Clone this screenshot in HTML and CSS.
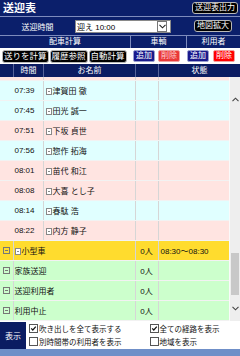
FILE: index.html
```html
<!DOCTYPE html>
<html lang="ja">
<head>
    <meta charset="UTF-8">
    <meta name="viewport" content="width=device-width, initial-scale=1.0">
    <title>送迎表</title>
    <link rel="stylesheet" href="styles.css">
</head>
<body>

    <div class="app">
        <!-- Title bar -->
        <div class="titlebar">
            <h1>送迎表</h1>
            <button class="btn-dark">送迎表出力</button>
        </div>

        <!-- Time selection -->
        <div class="timebar">
            <div class="time-label">送迎時間</div>
            <div class="select">
                <span>迎え 10:00</span>
                <span class="select-arrow">
                    <svg width="7" height="5" viewBox="0 0 7 5"><path d="M0.5 0.8 L3.5 3.8 L6.5 0.8" fill="none" stroke="#222" stroke-width="1.1"/></svg>
                </span>
            </div>
            <button class="btn-dark btn-map">地図拡大</button>
        </div>

        <!-- Section titles -->
        <div class="sections">
            <div class="sec sec-calc">配車計算</div>
            <div class="sec sec-car">車輌</div>
            <div class="sec sec-user">利用者</div>
        </div>

        <!-- Buttons -->
        <div class="toolbar">
            <div class="tool-group tool-calc">
                <button class="btn-dark">送りを計算</button>
                <button class="btn-dark">履歴参照</button>
                <button class="btn-dark">自動計算</button>
            </div>
            <div class="tool-group tool-car">
                <button class="btn-add">追加</button>
                <button class="btn-del">削除</button>
            </div>
            <div class="tool-group tool-user">
                <button class="btn-add">追加</button>
                <button class="btn-del btn-del-hot">削除</button>
            </div>
        </div>

        <!-- Grid header -->
        <div class="grid-head">
            <div class="gh"></div>
            <div class="gh">時間</div>
            <div class="gh">お名前</div>
            <div class="gh"></div>
            <div class="gh">状態</div>
        </div>

        <!-- Grid body -->
        <div class="grid-wrap">
            <div class="grid-body">
                <table class="rows">
                    <colgroup>
                        <col class="c-tree">
                        <col class="c-time">
                        <col class="c-name">
                        <col class="c-count">
                        <col class="c-state">
                    </colgroup>
                    <tbody>
                        <tr class="pink partial"><td></td><td></td><td></td><td></td><td></td></tr>
                        <tr class="cyan"><td></td><td class="time">07:39</td><td class="name"><i class="doc"></i>津賀田 徹</td><td></td><td></td></tr>
                        <tr class="cyan"><td></td><td class="time">07:45</td><td class="name"><i class="doc"></i>田光 誠一</td><td></td><td></td></tr>
                        <tr class="pink"><td></td><td class="time">07:51</td><td class="name"><i class="doc"></i>下坂 貞世</td><td></td><td></td></tr>
                        <tr class="cyan"><td></td><td class="time">07:56</td><td class="name"><i class="doc"></i>惣作 拓海</td><td></td><td></td></tr>
                        <tr class="pink"><td></td><td class="time">08:01</td><td class="name"><i class="doc"></i>苗代 和江</td><td></td><td></td></tr>
                        <tr class="pink"><td></td><td class="time">08:08</td><td class="name"><i class="doc"></i>大喜 とし子</td><td></td><td></td></tr>
                        <tr class="cyan"><td></td><td class="time">08:14</td><td class="name"><i class="doc"></i>春駄 浩</td><td></td><td></td></tr>
                        <tr class="pink"><td></td><td class="time">08:22</td><td class="name"><i class="doc"></i>内方 静子</td><td></td><td></td></tr>
                        <tr class="yellow group"><td class="tree"><i class="minus"></i></td><td colspan="2" class="gname"><i class="doc"></i>小型車</td><td class="count">0人</td><td class="state">08:30～08:30</td></tr>
                        <tr class="green group"><td class="tree"><i class="minus"></i></td><td colspan="2" class="gname">家族送迎</td><td class="count">0人</td><td></td></tr>
                        <tr class="green group"><td class="tree"><i class="minus"></i></td><td colspan="2" class="gname">送迎利用者</td><td class="count">0人</td><td></td></tr>
                        <tr class="green group"><td class="tree"><i class="minus"></i></td><td colspan="2" class="gname">利用中止</td><td class="count">0人</td><td></td></tr>
                    </tbody>
                </table>
            </div>
            <div class="scrollbar">
                <span class="sb-arrow sb-up">
                    <svg width="7" height="5" viewBox="0 0 7 5"><path d="M0.5 4.2 L3.5 1.2 L6.5 4.2" fill="none" stroke="#444" stroke-width="1.1"/></svg>
                </span>
                <div class="sb-track"><div class="sb-thumb"></div></div>
                <span class="sb-arrow sb-down">
                    <svg width="7" height="5" viewBox="0 0 7 5"><path d="M0.5 0.8 L3.5 3.8 L6.5 0.8" fill="none" stroke="#444" stroke-width="1.1"/></svg>
                </span>
            </div>
        </div>

        <!-- Display options -->
        <div class="options">
            <div class="opt-label">表示</div>
            <div class="opt-col">
                <label class="opt"><span class="cb on"><svg width="7" height="7" viewBox="0 0 7 7"><path d="M1.2 3.4 L2.8 5 L5.8 1.6" fill="none" stroke="#111" stroke-width="1.2"/></svg></span>吹き出しを全て表示する</label>
                <label class="opt"><span class="cb"></span>別時間帯の利用者を表示</label>
            </div>
            <div class="opt-col opt-col2">
                <label class="opt"><span class="cb on"><svg width="7" height="7" viewBox="0 0 7 7"><path d="M1.2 3.4 L2.8 5 L5.8 1.6" fill="none" stroke="#111" stroke-width="1.2"/></svg></span>全ての経路を表示</label>
                <label class="opt"><span class="cb"></span>地域を表示</label>
            </div>
        </div>
        <div class="footer-strip"></div>
    </div>

</body>
</html>
```

FILE: styles.css
```css
body {
    margin: 0;
    padding: 0;
    background-color: #fff;
    font-family: "Liberation Sans", "Noto Sans CJK JP", sans-serif;
}

.app {
    width: 240px;
    height: 356px;
    overflow: hidden;
}

button {
    font-family: "Liberation Sans", "Noto Sans CJK JP", sans-serif;
    white-space: nowrap;
    flex-shrink: 0;
    cursor: pointer;
}

/* Title bar */
.titlebar {
    display: flex;
    justify-content: space-between;
    align-items: center;
    height: 16px;
    padding: 0 2px 0 3px;
    background: #0b1f6b;
    border-bottom: 1px solid #7d8bbd;
}

.titlebar h1 {
    margin: 0;
    font-size: 11px;
    line-height: 16px;
    color: #fff;
    font-weight: bold;
}

.btn-dark {
    height: 12px;
    padding: 0 2px;
    font-size: 8px;
    line-height: 10px;
    color: #fff;
    background: #000;
    border: 1px solid #b8b8b8;
    border-radius: 3px;
}

/* Time selection */
.timebar {
    display: flex;
    align-items: center;
    height: 18px;
    background: #0b1f6b;
    border-bottom: 1px solid #7d8bbd;
}

.time-label {
    width: 75px;
    text-align: center;
    font-size: 8px;
    color: #fff;
}

.select {
    display: flex;
    justify-content: space-between;
    align-items: center;
    width: 96px;
    height: 13px;
    padding-left: 1px;
    font-size: 8px;
    background: #fff;
    border: 1px solid #8a8a8a;
    box-sizing: border-box;
}

.select-arrow {
    display: flex;
    align-items: center;
    justify-content: center;
    width: 10px;
    height: 11px;
    margin-right: 3px;
    border: 1px solid #777;
    box-sizing: border-box;
}

.btn-map {
    margin-left: 23px;
}

/* Section titles */
.sections {
    display: flex;
    height: 12px;
    background: #0b1f6b;
}

.sec {
    font-size: 8px;
    line-height: 12px;
    color: #fff;
    text-align: center;
}

.sec-calc {
    width: 130px;
}

.sec-car {
    width: 55px;
    border-left: 1px solid #7d8bbd;
}

.sec-user {
    flex: 1;
    border-left: 1px solid #7d8bbd;
}

/* Buttons */
.toolbar {
    display: flex;
    align-items: center;
    height: 16px;
    background: #fff;
}

.tool-group {
    display: flex;
    align-items: center;
    gap: 1px;
}

.tool-calc {
    width: 130px;
    padding-left: 2px;
    box-sizing: border-box;
}

.tool-calc .btn-dark {
    height: 13px;
    padding: 0 1px;
    font-size: 8.5px;
}

.tool-car {
    width: 55px;
    gap: 3px;
    padding-left: 3px;
    box-sizing: border-box;
}

.tool-user {
    gap: 4px;
    padding-left: 2px;
}

.btn-add,
.btn-del {
    height: 12px;
    padding: 0 2px;
    font-size: 8px;
    line-height: 10px;
    color: #fff;
    border-radius: 2px;
}

.btn-add {
    background: #1a1a8c;
    border: 1px solid #9aa0d0;
}

.btn-del {
    background: #e93838;
    color: #ffd0d0;
    border: 1px solid #f0a0a0;
}

.btn-del-hot {
    background: #ff0000;
    color: #fff;
}

/* Grid header */
.grid-head {
    display: grid;
    grid-template-columns: 13px 30px 92px 23px 1fr;
    height: 13px;
    background: #0b1c62;
}

.gh {
    font-size: 8px;
    line-height: 13px;
    color: #fff;
    text-align: center;
    border-left: 1px solid #56629a;
}

.gh:first-child {
    border-left: none;
}

/* Grid body */
.grid-wrap {
    display: flex;
    height: 244px;
}

.grid-body {
    width: 229px;
    overflow: hidden;
}

.rows {
    width: 229px;
    border-collapse: collapse;
    table-layout: fixed;
    font-size: 8px;
    color: #111;
}

.c-tree { width: 13px; }
.c-time { width: 30px; }
.c-name { width: 92px; }
.c-count { width: 23px; }

.rows td {
    height: 19px;
    padding: 0;
    border-bottom: 1px solid #f2f2f2;
    border-left: 1px solid #d6d6d6;
    white-space: nowrap;
    overflow: hidden;
}

.rows td:first-child {
    border-left: none;
}

.rows tr.partial td {
    height: 3px;
}

.rows tr:not(.group) td:nth-child(2) {
    border-left: none;
}

.cyan { background: #e0ffff; }
.pink { background: #ffe4e1; }
.yellow { background: #ffdc2e; }
.green { background: #ccffcc; }

.time {
    text-align: right;
    padding-right: 8px !important;
}

.name {
    padding-left: 2px !important;
}

.gname {
    padding-left: 1px !important;
}

.doc {
    display: inline-block;
    width: 4px;
    height: 5px;
    margin-right: 1px;
    vertical-align: -1px;
    border: 1px solid #888;
    background: linear-gradient(#888, #888) 1px 2px / 2px 1px no-repeat, #fff;
}

.tree {
    text-align: center;
}

.minus {
    display: inline-block;
    width: 5px;
    height: 5px;
    vertical-align: -1px;
    border: 1px solid #777;
    background: linear-gradient(#777, #777) 1px 2px / 3px 1px no-repeat;
}

.count {
    text-align: center;
}

.state {
    padding-left: 2px !important;
}

/* Fake scrollbar */
.scrollbar {
    display: flex;
    flex-direction: column;
    align-items: center;
    width: 11px;
    background: #eeeeee;
    border-left: 1px solid #fafafa;
    box-sizing: border-box;
}

.sb-arrow {
    display: flex;
    align-items: center;
    justify-content: center;
}

.sb-up {
    height: 45px;
}

.sb-down {
    height: 25px;
}

.sb-track {
    flex: 1;
    width: 100%;
    position: relative;
}

.sb-thumb {
    position: absolute;
    left: 1px;
    right: 1px;
    top: 131px;
    height: 42px;
    background: #c8c8c8;
}

/* Display options */
.options {
    display: flex;
    height: 28px;
    background: #fff;
}

.opt-label {
    display: flex;
    align-items: center;
    justify-content: center;
    width: 26px;
    margin-top: 1px;
    font-size: 8px;
    color: #fff;
    background: #0b1c62;
}

.opt-col {
    display: flex;
    flex-direction: column;
    justify-content: center;
    gap: 2px;
    padding-left: 3px;
}

.opt-col2 {
    padding-left: 0;
    margin-left: 28px;
}

.opt {
    display: flex;
    align-items: center;
    height: 11px;
    font-size: 7.5px;
    color: #111;
}

.cb {
    display: inline-flex;
    align-items: center;
    justify-content: center;
    width: 7px;
    height: 7px;
    margin-right: 1px;
    border: 1px solid #555;
    background: #fff;
}

.footer-strip {
    height: 7px;
    background: #6f8fc8;
}
```
